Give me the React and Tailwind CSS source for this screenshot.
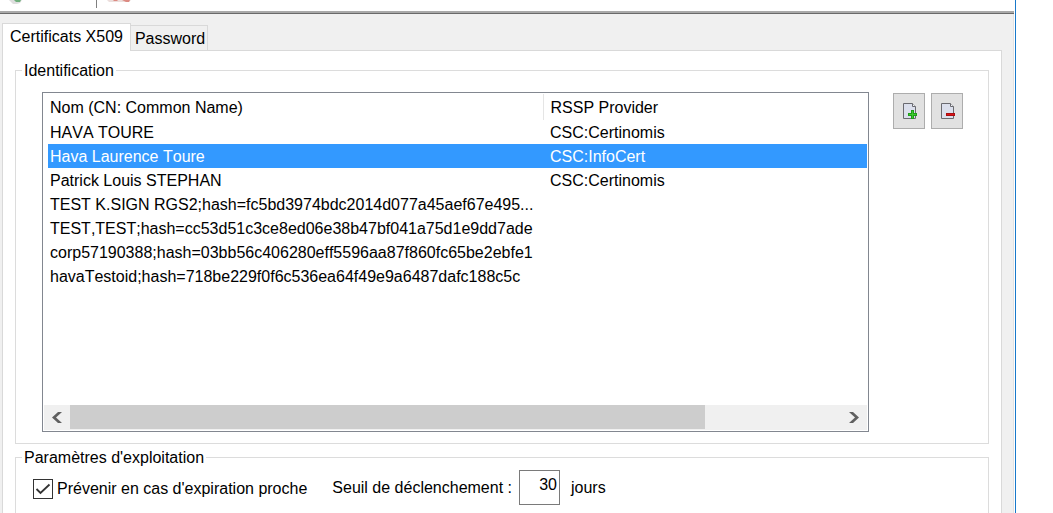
import { useState } from "react";

const certificates = [
  { name: "HAVA TOURE", provider: "CSC:Certinomis" },
  { name: "Hava Laurence Toure", provider: "CSC:InfoCert" },
  { name: "Patrick Louis STEPHAN", provider: "CSC:Certinomis" },
  { name: "TEST K.SIGN RGS2;hash=fc5bd3974bdc2014d077a45aef67e495...", provider: "" },
  { name: "TEST,TEST;hash=cc53d51c3ce8ed06e38b47bf041a75d1e9dd7ade", provider: "" },
  { name: "corp57190388;hash=03bb56c406280eff5596aa87f860fc65be2ebfe1", provider: "" },
  { name: "havaTestoid;hash=718be229f0f6c536ea64f49e9a6487dafc188c5c", provider: "" },
];

function PageIcon({ children }) {
  return (
    <svg width="16" height="18" viewBox="0 0 16 18" aria-hidden="true">
      <path d="M2.5 1.5H11.5L14.5 4.5V16.5H2.5Z" fill="#dbdfec" stroke="#6a6a70" />
      <path d="M11.5 1.5V4.5H14.5" fill="#f4f5f8" stroke="#6a6a70" />
      {children}
    </svg>
  );
}

function Toolbar() {
  return (
    <header>
      <div className="flex h-[11px] items-start bg-white">
        <svg width="96" height="6" viewBox="0 0 96 6" aria-hidden="true">
          <path d="M9 0H22L20 3L17 4H13L11 2Z" fill="#dedede" />
          <path d="M14 0H21L20 2H16Z" fill="#6fae7c" />
        </svg>
        <span className="h-2 w-px bg-[#808080]" />
        <svg width="40" height="6" viewBox="0 0 40 6" aria-hidden="true">
          <path d="M10 0H34L32 2H12Z" fill="#ecdedc" />
          <path d="M16 0H21L20 1H17ZM25 0H33L32 2H29Z" fill="#dc8a82" />
        </svg>
      </div>
      <div className="h-[2px] bg-[#a9a9a9]" />
      <div className="h-px bg-[#696969]" />
    </header>
  );
}

function CertificateList() {
  const [selected, setSelected] = useState(1);

  return (
    <div className="flex h-[340px] min-w-0 flex-1 flex-col border border-[#828790] p-px">
      <div className="flex-1">
        <table className="w-full table-fixed border-collapse text-left">
          <colgroup>
            <col className="w-[4px]" />
            <col className="w-[495px]" />
            <col />
          </colgroup>
          <thead>
            <tr className="h-[26px]">
              <td />
              <th className="border-r border-[#e5e5e5] p-0 pt-[2px] pl-[2px] font-normal">
                Nom (CN: Common Name)
              </th>
              <th className="p-0 pt-[2px] pl-[7px] font-normal">RSSP Provider</th>
            </tr>
          </thead>
          <tbody>
            {certificates.map((cert, index) => (
              <tr
                key={cert.name}
                onClick={() => setSelected(index)}
                className={`h-6 ${index === selected ? "text-white" : ""}`}
              >
                <td />
                <td
                  className={`p-0 pt-[2px] pl-[2px] whitespace-nowrap ${
                    index === selected ? "bg-[#3399ff]" : ""
                  }`}
                >
                  {cert.name}
                </td>
                <td
                  className={`p-0 pt-[2px] pl-[7px] ${
                    index === selected ? "bg-[#3399ff]" : ""
                  }`}
                >
                  {cert.provider}
                </td>
              </tr>
            ))}
          </tbody>
        </table>
      </div>
      <div className="flex h-[25px] bg-[#f0f0f0]">
        <button
          type="button"
          aria-label="Défiler à gauche"
          className="flex w-[26px] items-center justify-center"
        >
          <svg width="10" height="11" viewBox="0 0 10 11" aria-hidden="true">
            <path d="M6 0H10L4 5.5L10 11H6L0 5.5Z" fill="#606060" />
          </svg>
        </button>
        <div className="flex-1 pr-[136px]">
          <div className="h-6 bg-[#cdcdcd]" />
        </div>
        <button
          type="button"
          aria-label="Défiler à droite"
          className="flex w-[26px] items-center justify-center"
        >
          <svg width="10" height="11" viewBox="0 0 10 11" aria-hidden="true">
            <path d="M0 0H4L10 5.5L4 11H0L6 5.5Z" fill="#606060" />
          </svg>
        </button>
      </div>
    </div>
  );
}

export default function App() {
  const [warn, setWarn] = useState(true);
  const [threshold, setThreshold] = useState("30");

  return (
    <div className="min-h-screen bg-white pr-[37px] font-['Liberation_Sans',Arial,sans-serif] text-[16px] leading-[20px] text-black [font-kerning:none]">
      <div className="flex min-h-screen flex-col border-r border-[#1979ca] pr-px">
        <Toolbar />
        <main className="flex flex-1 flex-col border-r border-[#e3e3e3] bg-[#f0f0f0] pt-[9px] pr-[11px] pl-[2px]">
          <div role="tablist" className="flex items-end">
            <button
              type="button"
              role="tab"
              aria-selected="true"
              className="z-10 -mb-px h-7 border border-b-0 border-[#d9d9d9] bg-white px-[7px] pb-px"
            >
              Certificats X509
            </button>
            <button
              type="button"
              role="tab"
              aria-selected="false"
              className="h-[25px] border border-b-0 border-l-0 border-[#d9d9d9] pt-[2px] pr-[2px] pl-1"
            >
              Password
            </button>
          </div>

          <div
            role="tabpanel"
            className="flex flex-1 flex-col border border-b-0 border-[#d9d9d9] bg-white px-3 pt-2"
          >
            <fieldset className="border border-[#dcdcdc] pr-[25px] pb-[11px] pl-6">
              <legend className="-ml-[18px] px-[2px] pt-[2px]">Identification</legend>
              <div className="flex gap-6 pt-[11px] pl-[2px]">
                <CertificateList />
                <div className="flex gap-[6px] pt-px">
                  <button
                    type="button"
                    aria-label="Ajouter"
                    className="flex h-9 w-8 items-center justify-center border border-[#adadad] bg-[#e1e1e1]"
                  >
                    <PageIcon>
                      <path d="M10 8H13V11H16V14H13V17H10V14H7V11H10Z" fill="#1f9d1a" />
                      <path d="M11 9H12V12H15V13H12V16H11V13H8V12H11Z" fill="#3ccb2e" />
                    </PageIcon>
                  </button>
                  <button
                    type="button"
                    aria-label="Supprimer"
                    className="flex h-9 w-8 items-center justify-center border border-[#adadad] bg-[#e1e1e1]"
                  >
                    <PageIcon>
                      <path d="M7 11H16V14H7Z" fill="#a80f12" />
                      <path d="M8 12H15V13H8Z" fill="#dd1418" />
                    </PageIcon>
                  </button>
                </div>
              </div>
            </fieldset>

            <fieldset className="mt-[2px] flex-1 border border-b-0 border-[#dcdcdc] px-[17px]">
              <legend className="-ml-[11px] px-[2px] pt-[2px]">Paramètres d'exploitation</legend>
              <div className="flex items-center pt-[2px]">
                <label className="flex items-center gap-1 pt-[2px]">
                  <span className="grid">
                    <input
                      type="checkbox"
                      checked={warn}
                      onChange={(e) => setWarn(e.target.checked)}
                      className="peer col-start-1 row-start-1 size-5 appearance-none border border-[#333] bg-white"
                    />
                    <svg
                      viewBox="0 0 20 20"
                      aria-hidden="true"
                      className="pointer-events-none invisible col-start-1 row-start-1 size-5 peer-checked:visible"
                    >
                      <path d="M3.5 10L7.5 14L16.5 5.5" fill="none" stroke="#333" strokeWidth="1.8" />
                    </svg>
                  </span>
                  Prévenir en cas d'expiration proche
                </label>
                <label htmlFor="threshold" className="ml-[25px]">
                  Seuil de déclenchement :
                </label>
                <input
                  id="threshold"
                  type="text"
                  value={threshold}
                  onChange={(e) => setThreshold(e.target.value)}
                  className="ml-[7px] h-[35px] w-[41px] border border-[#7a7a7a] pr-[2px] pb-[6px] text-right"
                />
                <span className="ml-[11px]">jours</span>
              </div>
            </fieldset>
          </div>
        </main>
      </div>
    </div>
  );
}
